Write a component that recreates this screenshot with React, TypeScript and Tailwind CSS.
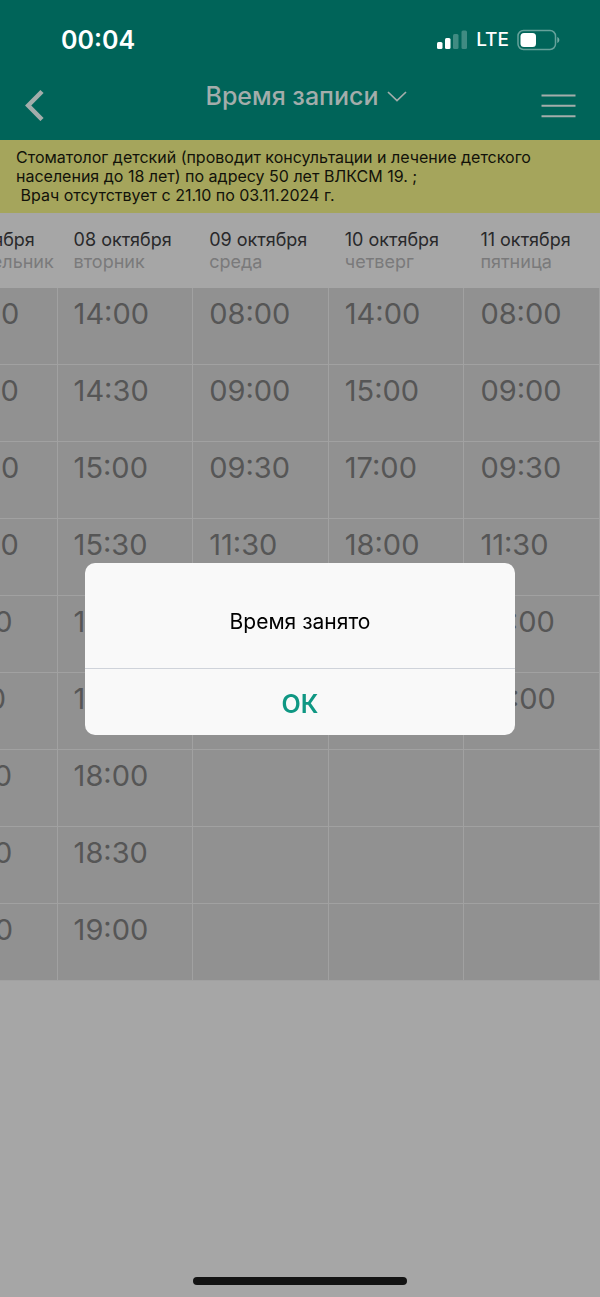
import React, { useState } from "react";

type Day = {
  date: string;
  weekday: string;
  slots: string[];
};

const days: Day[] = [
  {
    date: "07 октября",
    weekday: "понедельник",
    slots: ["08:00", "08:30", "09:00", "09:30", "10:30", "11:30", "12:30", "13:30", "14:30"],
  },
  {
    date: "08 октября",
    weekday: "вторник",
    slots: ["14:00", "14:30", "15:00", "15:30", "16:30", "17:30", "18:00", "18:30", "19:00"],
  },
  { date: "09 октября", weekday: "среда", slots: ["08:00", "09:00", "09:30", "11:30"] },
  { date: "10 октября", weekday: "четверг", slots: ["14:00", "15:00", "17:00", "18:00"] },
  {
    date: "11 октября",
    weekday: "пятница",
    slots: ["08:00", "09:00", "09:30", "11:30", "12:00", "14:00"],
  },
];

const rowCount = Math.max(...days.map((d) => d.slots.length));

function StatusBar() {
  return (
    <div className="flex h-20 items-center justify-between pl-[61px] pr-10 text-white">
      <span className="text-[25px] font-semibold leading-8">00:04</span>
      <div className="flex items-center gap-2">
        <svg width="31" height="20" viewBox="0 0 31 20" fill="currentColor">
          <rect x="0" y="12" width="5.5" height="7" rx="1.5" />
          <rect x="8" y="8" width="5.5" height="11" rx="1.5" />
          <rect x="16" y="4" width="5.5" height="15" rx="1.5" opacity="0.25" />
          <rect x="24.5" y="0.5" width="5.5" height="18.5" rx="1.5" opacity="0.25" />
        </svg>
        <span className="text-[19px] font-medium leading-8">LTE</span>
        <svg width="43" height="22" viewBox="0 0 43 22" fill="none">
          <rect x="1" y="1.5" width="37.5" height="19" rx="5.5" stroke="#fff" strokeOpacity="0.4" strokeWidth="1.5" />
          <rect x="3.5" y="4" width="15.5" height="14" rx="3.5" fill="#fff" />
          <path d="M40.3 8v6c1.3-.5 2-1.7 2-3s-.7-2.5-2-3z" fill="#fff" fillOpacity="0.45" />
        </svg>
      </div>
    </div>
  );
}

function NavBar() {
  return (
    <nav className="flex h-[60px] items-start justify-between px-6 text-[#a3adab]">
      <button type="button" aria-label="Назад" className="flex w-9 pt-[9px]">
        <svg width="20" height="32" viewBox="0 0 20 32" fill="none" stroke="currentColor" strokeWidth="4.5">
          <path d="M18 2.5L4.2 16.5L18 30.5" />
        </svg>
      </button>
      <button type="button" className="flex items-center gap-2 pl-3 text-[25px] font-medium leading-8">
        Время записи
        <svg width="20" height="12" viewBox="0 0 20 12" fill="none" stroke="currentColor" strokeWidth="1.7">
          <path d="M1 2L10 10.5L19 2" />
        </svg>
      </button>
      <button type="button" aria-label="Меню" className="flex w-9 pt-[13px]">
        <svg width="36" height="26" viewBox="0 0 36 26" stroke="currentColor" strokeWidth="2">
          <path d="M1.5 2.5H35.5M1.5 12.8H35.5M1.5 23.2H35.5" />
        </svg>
      </button>
    </nav>
  );
}

function Schedule() {
  return (
    <div className="flex justify-end overflow-hidden">
      <table className="w-[113%] shrink-0 table-fixed border-separate border-spacing-0 text-left">
        <thead>
          <tr className="h-[75px]">
            {days.map((day) => (
              <th key={day.date} scope="col" className="pl-4 font-normal align-middle">
                <div className="whitespace-nowrap text-lg leading-[22px] text-[#29292b]">{day.date}</div>
                <div className="whitespace-nowrap text-lg leading-[22px] text-[#7a7a7b]">{day.weekday}</div>
              </th>
            ))}
          </tr>
        </thead>
        <tbody>
          {Array.from({ length: rowCount }, (_, row) => (
            <tr key={row} className="h-[77px]">
              {days.map((day) => (
                <td
                  key={day.date}
                  className="border-b border-r border-[#a1a1a1] bg-[#919191] pl-4 pt-2 align-top"
                >
                  {day.slots[row] && (
                    <button type="button" className="block text-[29px] leading-9 text-[#565656]">
                      {day.slots[row]}
                    </button>
                  )}
                </td>
              ))}
            </tr>
          ))}
        </tbody>
      </table>
    </div>
  );
}

function BusyDialog({ onClose }: { onClose: () => void }) {
  return (
    <div className="fixed inset-0 flex items-center justify-center px-[85px]">
      <div
        role="alertdialog"
        aria-modal="true"
        aria-labelledby="busy-text"
        className="w-full overflow-hidden rounded-[10px] bg-[#f9f9f9] text-center"
      >
        <p id="busy-text" className="px-4 pb-[31px] pt-11 text-[21px] leading-[30px] text-black">
          Время занято
        </p>
        <button
          type="button"
          onClick={onClose}
          className="block h-[67px] w-full border-t border-[#cfd3da] pt-1 text-[25px] font-semibold leading-8 text-[#0f9783]"
        >
          ОК
        </button>
      </div>
    </div>
  );
}

export default function App() {
  const [busy, setBusy] = useState(true);

  return (
    <div className="flex min-h-screen flex-col bg-[#a6a6a6] font-['Inter','Liberation_Sans',sans-serif]">
      <header className="bg-[#006459]">
        <StatusBar />
        <NavBar />
      </header>

      <p className="whitespace-pre-line bg-[#a5a55c] px-4 py-2 text-base leading-[19px] text-[#12120a]">
        Стоматолог детский (проводит консультации и лечение детского населения до 18 лет) по адресу 50 лет ВЛКСМ 19. ;
        {"\n\u00a0"}Врач отсутствует с 21.10 по 03.11.2024 г.
      </p>

      <Schedule />

      {/* Home indicator */}
      <div className="mt-auto flex justify-center pb-3">
        <div className="h-2 w-[214px] rounded-full bg-[#131313]" />
      </div>

      {busy && <BusyDialog onClose={() => setBusy(false)} />}
    </div>
  );
}
